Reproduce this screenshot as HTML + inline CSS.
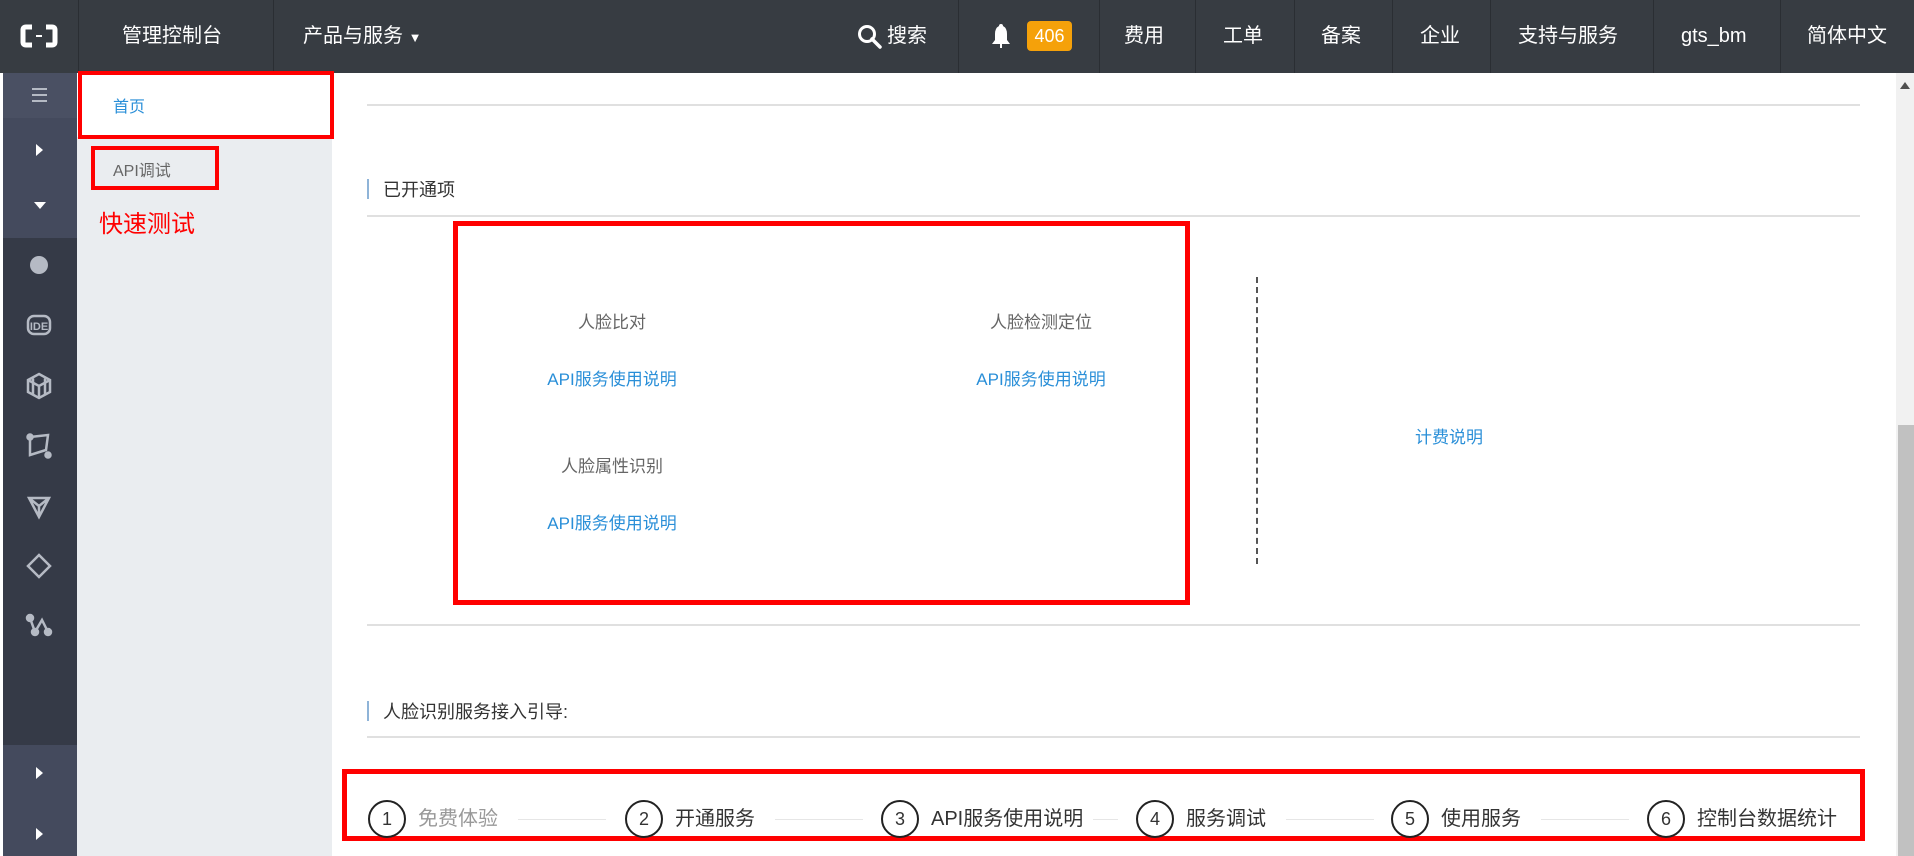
<!DOCTYPE html>
<html><head><meta charset="utf-8">
<style>
*{margin:0;padding:0;box-sizing:border-box}
body{width:1914px;height:856px;overflow:hidden;position:relative;background:#fff;font-family:"Liberation Sans","Noto Sans CJK SC",sans-serif}
.a{position:absolute;white-space:nowrap}
.hdr{left:0;top:0;width:1914px;height:73px;background:#373c42}
.nv{color:#fff;font-size:20px;top:22px;line-height:28px}
.dv{top:0;width:1px;height:73px;background:#2a2e33}
.sb{left:3px;top:73px;width:74px;height:783px;background:#353a47}
.t{color:#666;font-size:17px;transform:translateX(-50%)}
.l{color:#2a8fd8;font-size:17px;transform:translateX(-50%)}
.hr{height:2px;background:#e0e0e0;left:367px;width:1493px}
.cir{width:38px;height:38px;border:2px solid #222;border-radius:50%;font-size:18px;line-height:34px;text-align:center;color:#333;top:800px}
.st{font-size:20px;color:#333;top:805px;line-height:28px}
.ln{height:1px;background:#e6e6e6;top:819px;width:88px}
</style></head><body>
<div class="a hdr"></div>
<svg class="a" style="left:20px;top:24px" width="38" height="24" viewBox="0 0 38 24"><path d="M12 3H6Q3 3 3 6V18Q3 21 6 21H12M26 3H32Q35 3 35 6V18Q35 21 32 21H26" fill="none" stroke="#fff" stroke-width="5"/><rect x="16" y="11" width="6" height="2" fill="#fff"/></svg>
<div class="a dv" style="left:78px"></div>
<div class="a nv" style="left:122px">管理控制台</div>
<div class="a dv" style="left:273px"></div>
<div class="a nv" style="left:303px">产品与服务 <span style="font-size:13px">▼</span></div>
<svg class="a" style="left:857px;top:24px" width="26" height="26" viewBox="0 0 26 26"><circle cx="10" cy="10" r="7.5" fill="none" stroke="#fff" stroke-width="3"/><path d="M15 15L23 23" stroke="#fff" stroke-width="3.5" stroke-linecap="round"/></svg>
<div class="a nv" style="left:887px">搜索</div>
<div class="a dv" style="left:958px"></div>
<svg class="a" style="left:991px;top:23px" width="20" height="26" viewBox="0 0 20 26"><path d="M10 1Q12 1 12 3Q16 5 16 11V17L19 21H1L4 17V11Q4 5 8 3Q8 1 10 1Z" fill="#fff"/><rect x="9" y="21" width="2" height="4" fill="#fff"/></svg>
<div class="a" style="left:1027px;top:21px;width:45px;height:30px;background:#f5a10a;border-radius:4px;color:#fff;font-size:18px;line-height:30px;text-align:center">406</div>
<div class="a dv" style="left:1099px"></div>
<div class="a nv" style="left:1124px">费用</div>
<div class="a dv" style="left:1195px"></div>
<div class="a nv" style="left:1223px">工单</div>
<div class="a dv" style="left:1294px"></div>
<div class="a nv" style="left:1321px">备案</div>
<div class="a dv" style="left:1392px"></div>
<div class="a nv" style="left:1420px">企业</div>
<div class="a dv" style="left:1490px"></div>
<div class="a nv" style="left:1518px">支持与服务</div>
<div class="a dv" style="left:1653px"></div>
<div class="a nv" style="left:1681px">gts_bm</div>
<div class="a dv" style="left:1780px"></div>
<div class="a nv" style="left:1807px">简体中文</div>

<div class="a sb"></div>
<div class="a" style="left:3px;top:73px;width:74px;height:45px;background:#4a5063"></div>
<div class="a" style="left:3px;top:118px;width:74px;height:120px;background:#444a5d"></div>
<div class="a" style="left:3px;top:745px;width:74px;height:111px;background:#444a5d"></div>
<svg class="a" style="left:32px;top:88px" width="15" height="14"><path d="M0 1H15M0 7H15M0 13H15" stroke="#b5bac4" stroke-width="2"/></svg>
<svg class="a" style="left:36px;top:144px" width="8" height="12"><path d="M0 0L7 6L0 12Z" fill="#fff"/></svg>
<svg class="a" style="left:34px;top:202px" width="12" height="8"><path d="M0 0H12L6 7Z" fill="#fff"/></svg>
<svg class="a" style="left:36px;top:767px" width="8" height="12"><path d="M0 0L7 6L0 12Z" fill="#fff"/></svg>
<svg class="a" style="left:36px;top:828px" width="8" height="12"><path d="M0 0L7 6L0 12Z" fill="#fff"/></svg>
<svg class="a" style="left:0;top:245px" width="80" height="400" viewBox="0 0 80 400" fill="none" stroke="#b5bac4" stroke-width="2.5">
<circle cx="39" cy="20" r="9" fill="#b5bac4" stroke="none"/>
<rect x="28" y="71" width="22" height="18" rx="6"/><text x="39" y="85" font-size="11" font-weight="bold" fill="#b5bac4" stroke="none" text-anchor="middle" font-family="Liberation Sans">IDE</text>
<path d="M39 129L50 135V147L39 153L28 147V135Z M28 135L39 141L50 135M39 141V153M33 132V150M45 132V150"/>
<path d="M30 192L48 190L46 205L30 210Z"/><circle cx="30" cy="192" r="2.5" fill="#b5bac4"/><circle cx="48" cy="210" r="2.5" fill="#b5bac4"/>
<path d="M29 253H49L39 272Z M39 272V261L29 253M39 261L49 253"/>
<path d="M39 310L50 321L39 332L28 321Z"/>
<path d="M30 373L35 387L42 375L48 387"/><circle cx="30" cy="373" r="3" fill="#b5bac4"/><circle cx="35" cy="387" r="3" fill="#b5bac4"/><circle cx="48" cy="387" r="3" fill="#b5bac4"/>
</svg>

<div class="a" style="left:77px;top:73px;width:255px;height:783px;background:#eaedf0"></div>
<div class="a" style="left:77px;top:73px;width:255px;height:64px;background:#fff"></div>
<div class="a" style="left:78px;top:71px;width:256px;height:68px;border:4px solid #f00"></div>
<div class="a" style="left:113px;top:93px;font-size:16px;color:#2a8fd8">首页</div>
<div class="a" style="left:91px;top:146px;width:128px;height:44px;border:4px solid #f00"></div>
<div class="a" style="left:113px;top:157px;font-size:16px;color:#666">API调试</div>
<div class="a" style="left:99px;top:204px;font-size:24px;color:#f00">快速测试</div>

<div class="a hr" style="top:104px"></div>
<div class="a" style="left:367px;top:179px;width:2px;height:20px;background:#8fb4d8"></div>
<div class="a" style="left:383px;top:176px;font-size:18px;color:#333">已开通项</div>
<div class="a hr" style="top:215px"></div>
<div class="a" style="left:453px;top:221px;width:737px;height:384px;border:5px solid #f00"></div>
<div class="a t" style="left:612px;top:308px">人脸比对</div>
<div class="a t" style="left:1041px;top:308px">人脸检测定位</div>
<div class="a l" style="left:612px;top:365px">API服务使用说明</div>
<div class="a l" style="left:1041px;top:365px">API服务使用说明</div>
<div class="a t" style="left:612px;top:452px">人脸属性识别</div>
<div class="a l" style="left:612px;top:509px">API服务使用说明</div>
<div class="a" style="left:1256px;top:277px;width:0;height:287px;border-left:2px dashed #555"></div>
<div class="a l" style="left:1449px;top:423px">计费说明</div>
<div class="a hr" style="top:624px"></div>
<div class="a" style="left:367px;top:701px;width:2px;height:20px;background:#8fb4d8"></div>
<div class="a" style="left:383px;top:698px;font-size:18px;color:#333">人脸识别服务接入引导:</div>
<div class="a hr" style="top:736px"></div>
<div class="a" style="left:342px;top:769px;width:1523px;height:72px;border:5px solid #f00"></div>
<div class="a cir" style="left:368px">1</div><div class="a st" style="left:418px;color:#999">免费体验</div><div class="a ln" style="left:518px"></div>
<div class="a cir" style="left:625px">2</div><div class="a st" style="left:675px">开通服务</div><div class="a ln" style="left:775px"></div>
<div class="a cir" style="left:881px">3</div><div class="a st" style="left:931px">API服务使用说明</div><div class="a ln" style="left:1093px;width:25px"></div>
<div class="a cir" style="left:1136px">4</div><div class="a st" style="left:1186px">服务调试</div><div class="a ln" style="left:1286px"></div>
<div class="a cir" style="left:1391px">5</div><div class="a st" style="left:1441px">使用服务</div><div class="a ln" style="left:1541px"></div>
<div class="a cir" style="left:1647px">6</div><div class="a st" style="left:1697px">控制台数据统计</div>

<div class="a" style="left:1896px;top:73px;width:18px;height:783px;background:#f1f1f1"></div>
<div class="a" style="left:1898px;top:425px;width:16px;height:431px;background:#c1c1c1"></div>
<svg class="a" style="left:1900px;top:82px" width="10" height="8"><path d="M0 7H10L5 0Z" fill="#505050"/></svg>
</body></html>
